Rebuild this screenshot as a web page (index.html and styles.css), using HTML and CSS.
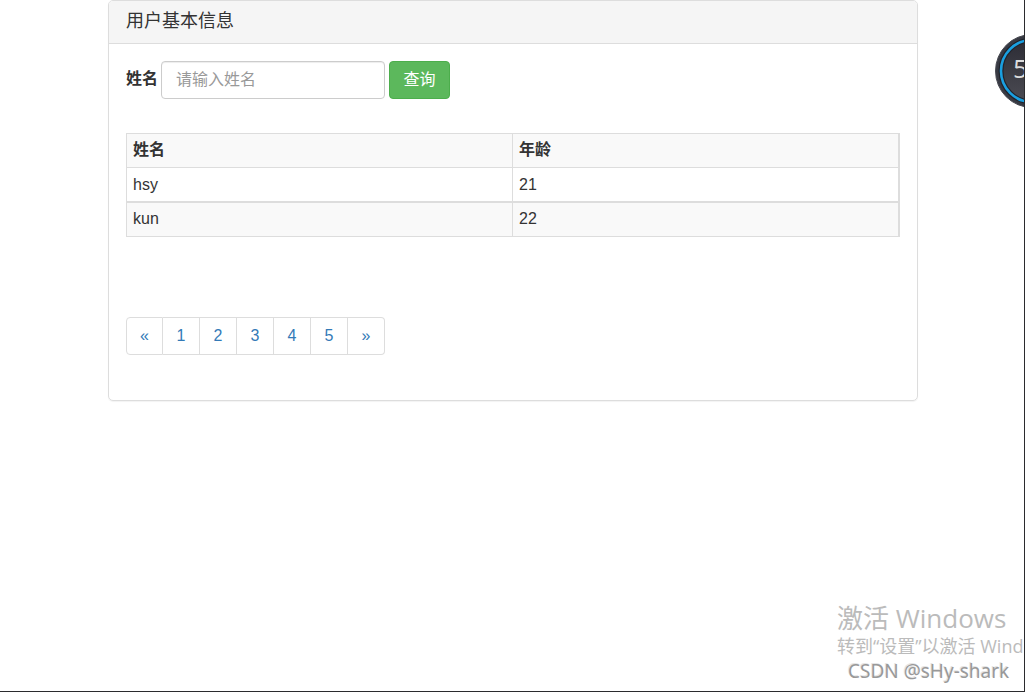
FILE: index.html
```html
<!DOCTYPE html>
<html lang="zh-CN">
<head>
<meta charset="utf-8">
<title>用户基本信息</title>
<link rel="stylesheet" href="styles.css">
</head>
<body>
<div class="screen">
  <main class="panel">
    <header class="panel-heading"><h1 class="panel-title">用户基本信息</h1></header>
    <div class="panel-body">
      <form class="search">
        <label class="search-label" for="name">姓名</label>
        <input class="search-input" id="name" type="text" placeholder="请输入姓名">
        <button class="search-button" type="button">查询</button>
      </form>
      <table class="users">
        <thead>
          <tr><th scope="col">姓名</th><th scope="col">年龄</th></tr>
        </thead>
        <tbody>
          <tr><td>hsy</td><td>21</td></tr>
          <tr><td>kun</td><td>22</td></tr>
        </tbody>
      </table>
      <nav aria-label="分页">
        <ul class="pagination">
          <li><a href="#">«</a></li>
          <li><a href="#">1</a></li>
          <li><a href="#">2</a></li>
          <li><a href="#">3</a></li>
          <li><a href="#">4</a></li>
          <li><a href="#">5</a></li>
          <li><a href="#">»</a></li>
        </ul>
      </nav>
    </div>
  </main>
  <div class="gauge">
    <svg class="gauge-dial" viewBox="0 0 74 74" aria-hidden="true">
      <defs>
        <linearGradient id="face" x1="0" y1="0" x2="0" y2="1">
          <stop offset="0" stop-color="#2c2c35"/>
          <stop offset="1" stop-color="#4b4b53"/>
        </linearGradient>
      </defs>
      <circle cx="37" cy="37" r="36.5" fill="#383a43" stroke="#484a52" stroke-width="1"/>
      <circle cx="37" cy="37" r="31" fill="url(#face)" stroke="#22232b" stroke-width="5"/>
      <circle cx="37" cy="37" r="31" fill="none" stroke="#1a9fe0" stroke-width="2.6"/>
    </svg>
    <span class="gauge-value">5</span>
  </div>
  <div class="watermark">
    <p class="watermark-title">激活 Windows</p>
    <p class="watermark-text">转到“设置”以激活 Windows。</p>
    <p class="watermark-author">CSDN @sHy-shark</p>
  </div>
</div>
</body>
</html>
```

FILE: styles.css
```css
* {
  box-sizing: border-box;
}

body {
  margin: 0;
  background: #fff;
  color: #333;
  font: 16px/24px "Liberation Sans", "Noto Sans CJK SC", sans-serif;
}

.screen {
  position: relative;
  min-height: 100vh;
  overflow: hidden;
  border-right: 1px solid #2b2b2e;
  border-bottom: 1px solid #2b2b2e;
}

.panel {
  margin: 0 106px 0 108px;
  border: 1px solid #ddd;
  border-radius: 5px;
  box-shadow: 0 1px 1px rgba(0, 0, 0, 0.05);
}

.panel-heading {
  padding: 8px 17px 10px;
  background: #f5f5f5;
  border-bottom: 1px solid #ddd;
  border-radius: 4px 4px 0 0;
}

.panel-title {
  margin: 0;
  font-size: 18px;
  font-weight: 400;
  line-height: 24px;
}

.panel-body {
  padding: 17px 17px 45px;
}

.search {
  display: flex;
  align-items: center;
  margin-bottom: 34px;
}

.search-label {
  margin-right: 3px;
  padding-bottom: 2px;
  font-weight: 700;
}

.search-input {
  width: 224px;
  height: 38px;
  margin-right: 4px;
  padding: 0 14px;
  border: 1px solid #ccc;
  border-radius: 4px;
  box-shadow: inset 0 1px 1px rgba(0, 0, 0, 0.075);
  background: #fff;
  color: #555;
  font: inherit;
}

.search-input::placeholder {
  color: #999;
  opacity: 1;
}

.search-button {
  width: 61px;
  height: 38px;
  padding: 0;
  border: 1px solid #4cae4c;
  border-radius: 4px;
  background: #5cb85c;
  color: #fff;
  font: inherit;
}

.users {
  width: 100%;
  margin-bottom: 80px;
  table-layout: fixed;
  border-collapse: separate;
  border-spacing: 0;
  border: solid #ddd;
  border-width: 1px 1px 0 1px;
}

.users th,
.users td {
  height: 34px;
  padding: 0 6px 1px;
  border-right: 1px solid #ddd;
  border-bottom: 1px solid #ddd;
  text-align: left;
}

.users th,
.users tr:nth-child(even) td {
  background: #f9f9f9;
}

.users tbody tr:nth-child(odd) td {
  height: 35px;
  padding-bottom: 0;
  border-bottom-width: 2px;
}

.pagination {
  display: flex;
  margin: 0;
  padding: 0;
  list-style: none;
}

.pagination a {
  display: block;
  width: 37px;
  height: 38px;
  border: solid #ddd;
  border-width: 1px 1px 1px 0;
  color: #337ab7;
  line-height: 36px;
  text-align: center;
  text-decoration: none;
}

.pagination li:first-child a {
  border-left-width: 1px;
  border-radius: 4px 0 0 4px;
}

.pagination li:last-child a {
  border-radius: 0 4px 4px 0;
}

.gauge {
  position: absolute;
  top: 34px;
  right: -45px;
  width: 74px;
  height: 74px;
}

.gauge-dial {
  display: block;
}

.gauge-value {
  position: absolute;
  top: 19px;
  left: 18px;
  color: #ddd;
  font: 26px/30px "Open Sans", sans-serif;
}

.watermark {
  position: absolute;
  bottom: 7px;
  left: calc(100% - 187px);
  color: #bbb;
  font-family: "Open Sans", "Noto Sans CJK SC", sans-serif;
  white-space: nowrap;
}

.watermark p {
  margin: 0;
}

.watermark-title {
  font-size: 26px;
  line-height: 32px;
}

.watermark-text {
  font-size: 18px;
  line-height: 24px;
}

.watermark .watermark-author {
  margin-left: 11px;
  color: #999;
  font-family: "Noto Sans", sans-serif;
  font-size: 19px;
  line-height: 26px;
  text-shadow: -1px -1px 0 #e4e4e4;
}
```
